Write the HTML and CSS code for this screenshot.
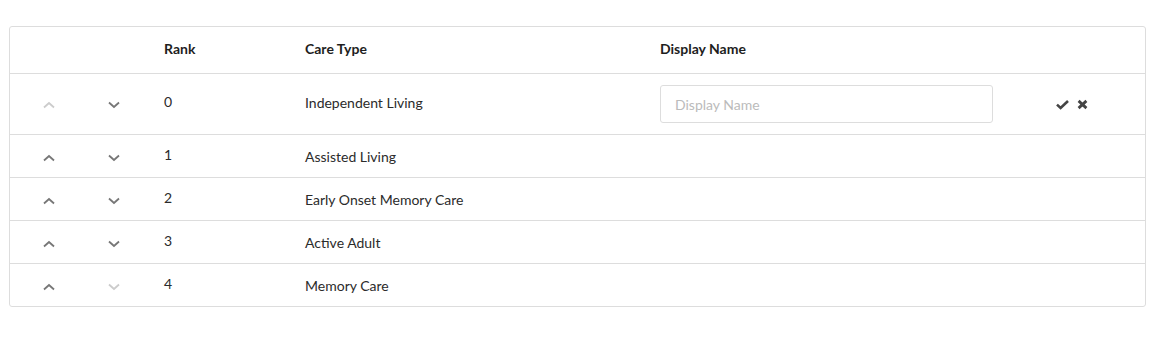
FILE: index.html
```html
<!DOCTYPE html>
<html lang="en">
<head>
    <meta charset="UTF-8">
    <meta name="viewport" content="width=device-width, initial-scale=1.0">
    <title>Care Types</title>
    <link rel="stylesheet" href="styles.css">
</head>
<body>
    <div class="card">
        <table class="care-table">
            <colgroup>
                <col class="col-up">
                <col class="col-down">
                <col class="col-rank">
                <col class="col-type">
                <col class="col-name">
                <col>
            </colgroup>
            <thead>
                <tr>
                    <th></th>
                    <th></th>
                    <th class="rank">Rank</th>
                    <th>Care Type</th>
                    <th>Display Name</th>
                    <th></th>
                </tr>
            </thead>
            <tbody>
                <tr class="editing">
                    <td class="arrow"><svg class="chev disabled" viewBox="0 0 12 6"><path d="M1 5.5L6 1l5 4.5"/></svg></td>
                    <td class="arrow"><svg class="chev" viewBox="0 0 12 6"><path d="M1 .5L6 5l5-4.5"/></svg></td>
                    <td class="rank">0</td>
                    <td>Independent Living</td>
                    <td class="name"><input type="text" class="name-input" placeholder="Display Name"></td>
                    <td class="actions">
                        <svg class="act check" viewBox="0 0 13 9"><path d="M1 4.6l3.6 3.3L12 1" /></svg>
                        <svg class="act cross" viewBox="0 0 11 9"><path d="M1.6 .9l7.8 7.2M9.4 .9L1.6 8.1" /></svg>
                    </td>
                </tr>
                <tr>
                    <td class="arrow"><svg class="chev" viewBox="0 0 12 6"><path d="M1 5.5L6 1l5 4.5"/></svg></td>
                    <td class="arrow"><svg class="chev" viewBox="0 0 12 6"><path d="M1 .5L6 5l5-4.5"/></svg></td>
                    <td class="rank">1</td>
                    <td>Assisted Living</td>
                    <td></td>
                    <td></td>
                </tr>
                <tr>
                    <td class="arrow"><svg class="chev" viewBox="0 0 12 6"><path d="M1 5.5L6 1l5 4.5"/></svg></td>
                    <td class="arrow"><svg class="chev" viewBox="0 0 12 6"><path d="M1 .5L6 5l5-4.5"/></svg></td>
                    <td class="rank">2</td>
                    <td>Early Onset Memory Care</td>
                    <td></td>
                    <td></td>
                </tr>
                <tr>
                    <td class="arrow"><svg class="chev" viewBox="0 0 12 6"><path d="M1 5.5L6 1l5 4.5"/></svg></td>
                    <td class="arrow"><svg class="chev" viewBox="0 0 12 6"><path d="M1 .5L6 5l5-4.5"/></svg></td>
                    <td class="rank">3</td>
                    <td>Active Adult</td>
                    <td></td>
                    <td></td>
                </tr>
                <tr>
                    <td class="arrow"><svg class="chev" viewBox="0 0 12 6"><path d="M1 5.5L6 1l5 4.5"/></svg></td>
                    <td class="arrow"><svg class="chev disabled" viewBox="0 0 12 6"><path d="M1 .5L6 5l5-4.5"/></svg></td>
                    <td class="rank">4</td>
                    <td>Memory Care</td>
                    <td></td>
                    <td></td>
                </tr>
            </tbody>
        </table>
    </div>
</body>
</html>
```

FILE: styles.css
```css
body {
    margin: 26px 27px 0 9px;
    font-family: 'Lato', 'Noto Sans', sans-serif;
    font-size: 14px;
    color: #2b2b2b;
    background: #fff;
}

.card {
    border: 1px solid #ddd;
    border-radius: 3px;
    background: #fff;
}

.care-table {
    width: 100%;
    border-collapse: collapse;
    table-layout: fixed;
}

.col-up { width: 76px; }
.col-down { width: 56px; }
.col-rank { width: 155px; }
.col-type { width: 355px; }
.col-name { width: 395px; }

.care-table th {
    height: 42px;
    padding: 0 8px 4px;
    text-align: left;
    font-weight: 700;
    color: #1e1e1e;
    border-bottom: 1px solid #ddd;
}

.care-table td {
    height: 42px;
    padding: 0 8px;
    border-bottom: 1px solid #ddd;
    vertical-align: middle;
}

.care-table tbody tr:last-child td {
    border-bottom: none;
}

.care-table tr.editing td {
    height: 56px;
    padding-bottom: 4px;
}

.care-table th.rank,
.care-table td.rank {
    padding-left: 22px;
}

.care-table td.rank {
    position: relative;
    top: -2px;
}

.care-table tr.editing td.rank {
    top: -1px;
}

.care-table td.arrow {
    padding: 0;
    text-align: center;
}

.care-table td.arrow:first-child {
    padding-left: 2px;
}

.care-table tr.editing td.arrow,
.care-table tr.editing td.actions {
    height: 58px;
    padding-bottom: 2px;
}

.care-table tr.editing td.name {
    height: 60px;
    padding-bottom: 0;
}

.chev {
    display: inline-block;
    width: 12px;
    height: 6px;
    fill: none;
    stroke: #777;
    stroke-width: 1.8;
    vertical-align: middle;
    overflow: visible;
}

.chev.disabled {
    stroke: #ccc;
}

.name-input {
    box-sizing: border-box;
    width: 333px;
    height: 38px;
    padding: 0 14px;
    border: 1px solid #ddd;
    border-radius: 3px;
    font-family: 'Lato', 'Noto Sans', sans-serif;
    font-size: 14px;
    color: #333;
    outline: none;
}

.name-input::placeholder {
    color: #bbb;
}

.care-table td.actions {
    white-space: nowrap;
    padding-left: 9px;
}

.act {
    display: inline-block;
    height: 9px;
    fill: none;
    stroke: #444;
    stroke-width: 2.6;
    vertical-align: middle;
    overflow: visible;
}

.act.check {
    width: 13px;
    margin-right: 4px;
}

.act.cross {
    width: 11px;
    stroke-width: 2.8;
}
```
